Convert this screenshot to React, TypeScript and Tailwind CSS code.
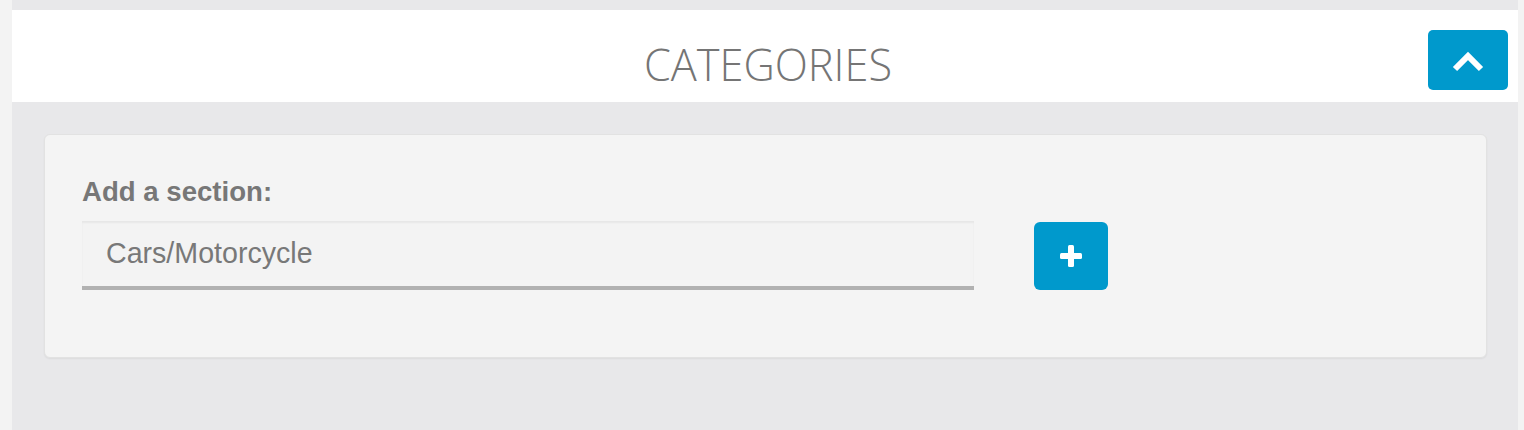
import React from "react";

export default function App() {
  return (
    <div className="flex w-full h-[430px] bg-[#f3f3f3]" style={{ fontFamily: '"Liberation Sans", Arial, sans-serif' }}>
      <div className="ml-[12px] mr-[6px] flex-1 bg-[#e8e8ea] pt-[10px] flex flex-col">
        <div className="h-[92px] bg-white grid grid-cols-[1fr_auto_1fr] items-start">
          <div />
          <h1
            className="mt-[28px] ml-[6px] text-[43.3px] leading-[54px] font-light text-[#757575]"
            style={{ fontFamily: '"Open Sans", Lato, sans-serif' }}
          >
            CATEGORIES
          </h1>
          <div className="flex justify-end pt-[20px] pr-[10px]">
            <button className="w-[80px] h-[60px] rounded-[5px] bg-[#0099cc] flex items-center justify-center">
              <svg width="32" height="22" viewBox="0 0 32 22" className="mt-[2px]">
                <path d="M3 19 L16 6 L29 19" fill="none" stroke="white" strokeWidth="6" strokeLinecap="butt" strokeLinejoin="miter" />
              </svg>
            </button>
          </div>
        </div>
        <div className="pl-[32px] pr-[31px] pt-[32px]">
          <div className="h-[224px] rounded-[6px] border border-[#e2e2e2] bg-[#f4f4f4] shadow-[0_1px_2px_rgba(0,0,0,0.06)] pl-[37px] pt-[42px]">
            <div className="text-[27.6px] leading-[30px] font-bold text-[#777777]">Add a section:</div>
            <div className="mt-[14px] flex items-start">
              <div className="w-[892px] h-[69px] bg-[#f3f3f3] border-b-[4px] border-[#b1b1b1] shadow-[inset_0_2px_2px_rgba(0,0,0,0.05)] flex items-center pl-[24px] text-[28.6px] text-[#787878]">
                Cars/Motorcycle
              </div>
              <button className="ml-[60px] mt-[1px] w-[74px] h-[68px] rounded-[6px] bg-[#0099cc] flex items-center justify-center">
                <svg width="22" height="22" viewBox="0 0 22 22">
                  <rect x="8" y="0" width="6" height="22" rx="1.5" fill="white" />
                  <rect x="0" y="8" width="22" height="6" rx="1.5" fill="white" />
                </svg>
              </button>
            </div>
          </div>
        </div>
      </div>
    </div>
  );
}
